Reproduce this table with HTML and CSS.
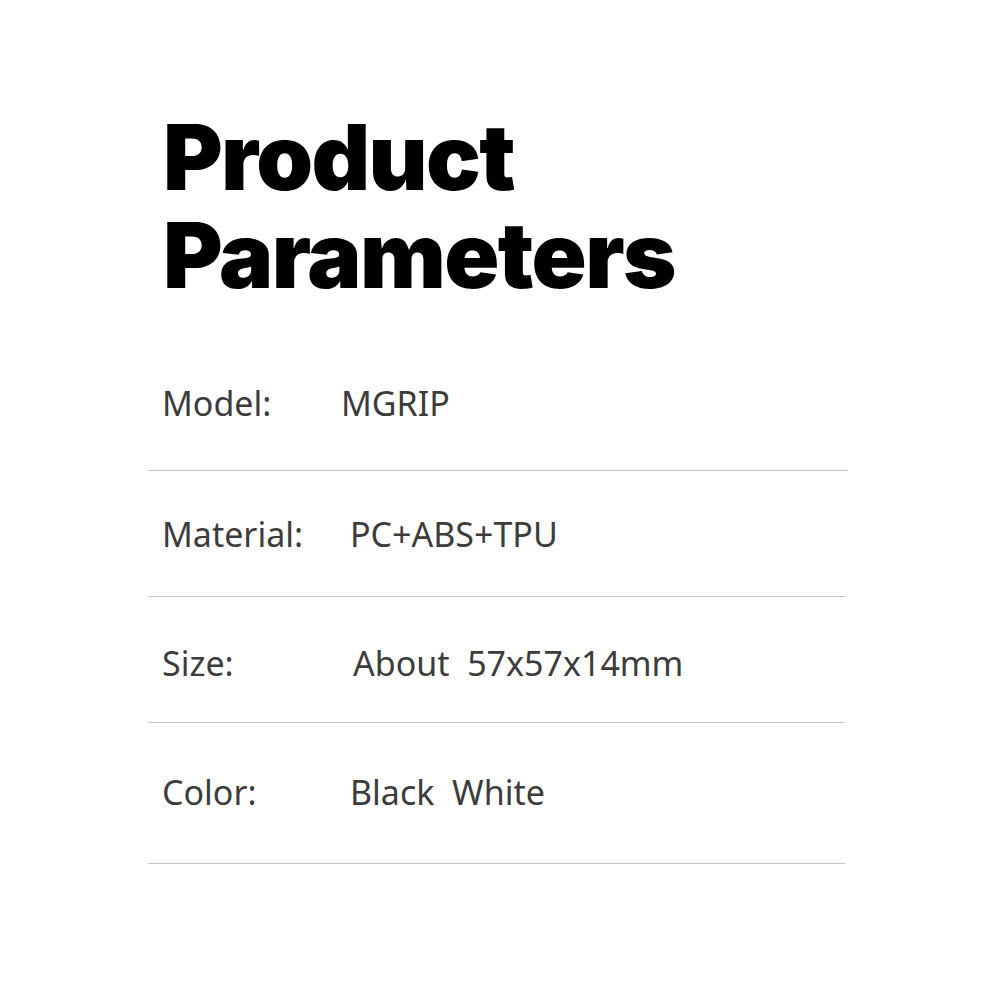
FILE: index.html
```html
<!DOCTYPE html>
<html>
<head>
<meta charset="utf-8">
<link rel="stylesheet" href="styles.css">
</head>
<body>
<main class="page">
  <h1 class="title">Product<br>Parameters</h1>
  <div class="params">
    <div class="row row-first">
      <span class="label">Model:</span>
      <span class="value value-model">MGRIP</span>
    </div>
    <div class="row row-second">
      <span class="label">Material:</span>
      <span class="value">PC+ABS+TPU</span>
    </div>
    <div class="row row-third">
      <span class="label">Size:</span>
      <span class="value value-size">About&nbsp; 57x57x14mm</span>
    </div>
    <div class="row row-last">
      <span class="label">Color:</span>
      <span class="value">Black&nbsp; White</span>
    </div>
  </div>
</main>
</body>
</html>
```

FILE: styles.css
```css
html, body {
  margin: 0;
  padding: 0;
  background: #ffffff;
}

.page {
  width: 1000px;
  height: 1000px;
  padding-left: 148px;
  box-sizing: border-box;
}

.title {
  margin: 0;
  padding-top: 108px;
  padding-left: 15px;
  font-family: "Inter", "Liberation Sans", sans-serif;
  font-weight: 900;
  font-size: 91px;
  line-height: 98px;
  letter-spacing: -1.6px;
  color: #000000;
}

.params {
  margin-top: 43px;
  width: 700px;
}

.row {
  display: flex;
  align-items: flex-start;
  height: 126px;
  box-sizing: border-box;
  padding-top: 52px;
  padding-left: 14px;
  border-bottom: 1px solid #c6c6c6;
  font-family: "Noto Sans", "Open Sans", sans-serif;
  font-size: 34px;
  line-height: 34px;
  color: #3c3c3c;
}

.row-first {
  height: 124px;
  padding-top: 39px;
}

.row-second {
  width: 697px;
  padding-top: 46px;
}

.row-third {
  width: 697px;
  padding-top: 49px;
}

.row-last {
  width: 697px;
  height: 141px;
  padding-top: 52px;
}

.label {
  width: 188px;
  flex: none;
}

.value-model {
  margin-left: -9px;
}

.value-size {
  margin-left: 3px;
}
```
